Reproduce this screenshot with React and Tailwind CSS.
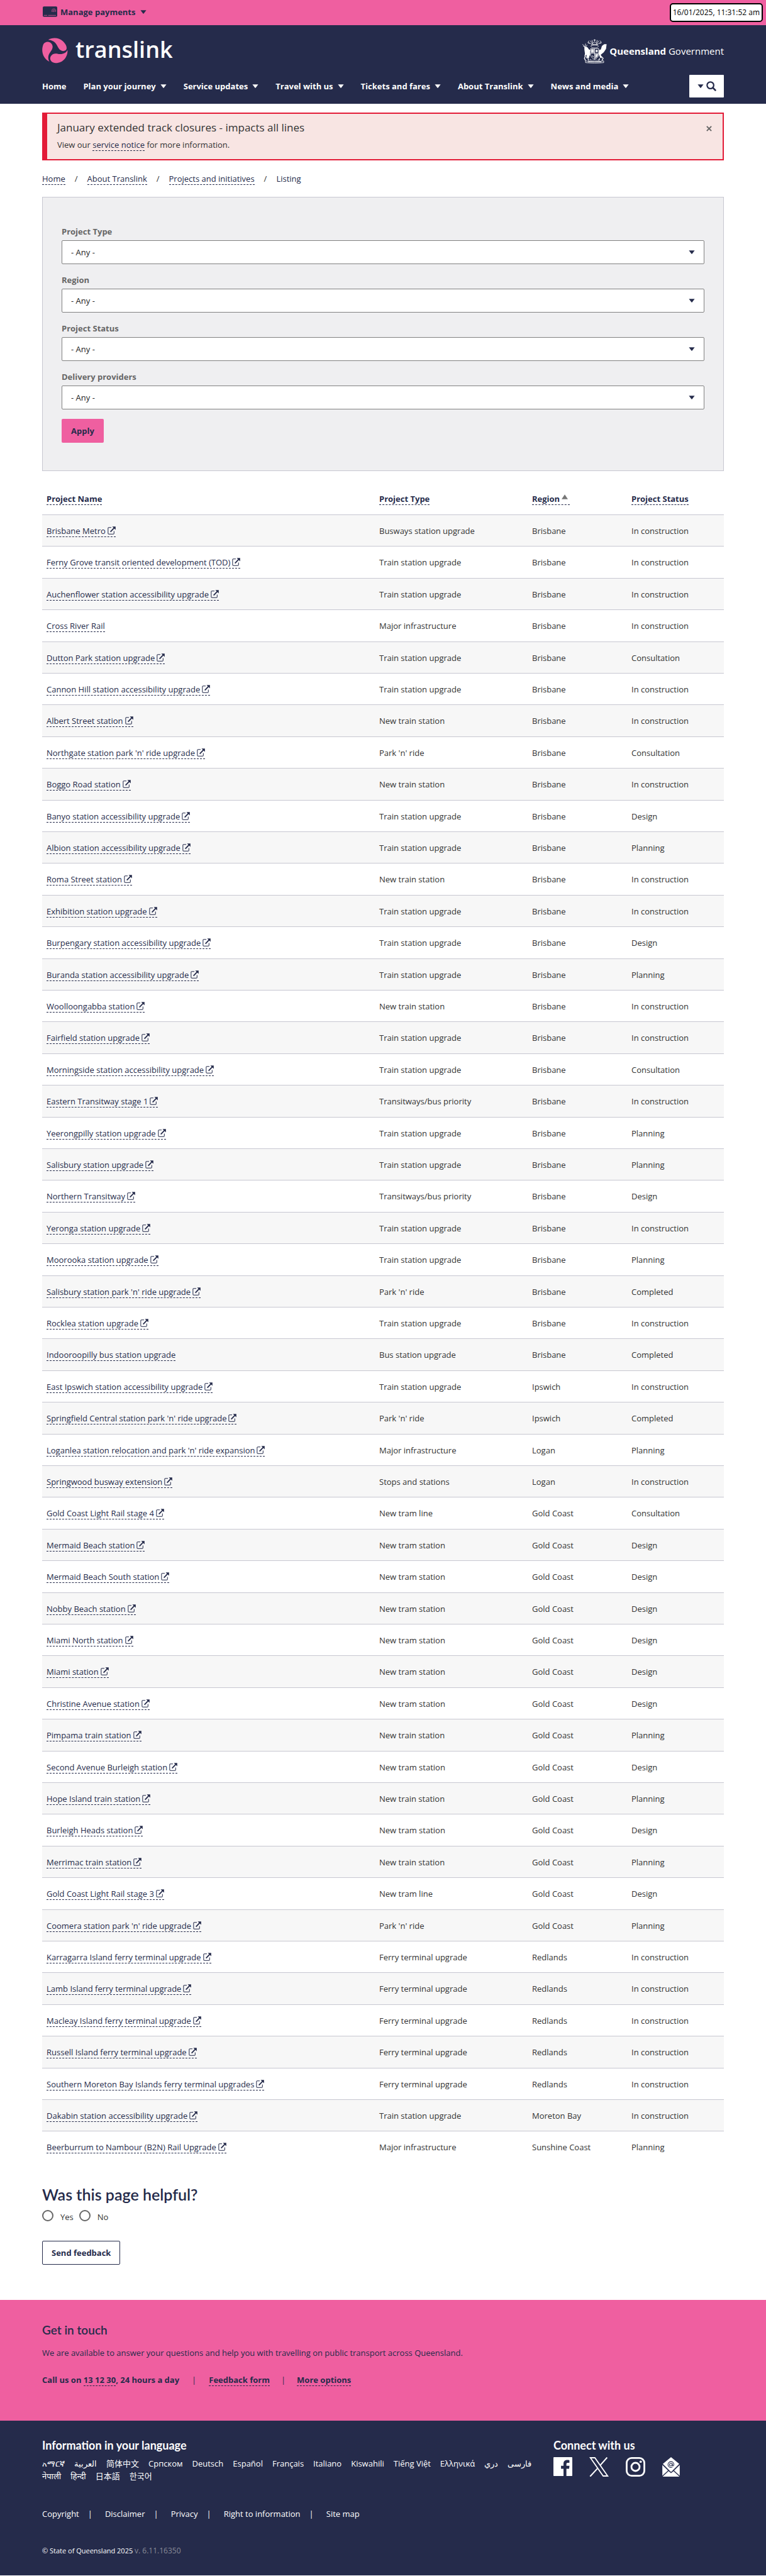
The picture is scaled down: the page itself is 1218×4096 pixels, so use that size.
import React from "react";

const NAV = [
  { label: "Home", menu: false },
  { label: "Plan your journey", menu: true },
  { label: "Service updates", menu: true },
  { label: "Travel with us", menu: true },
  { label: "Tickets and fares", menu: true },
  { label: "About Translink", menu: true },
  { label: "News and media", menu: true },
];

const FILTERS = [
  { id: "type", label: "Project Type" },
  { id: "region", label: "Region" },
  { id: "status", label: "Project Status" },
  { id: "providers", label: "Delivery providers" },
];

const TRAIN = "Train station upgrade";
const NEW_TRAIN = "New train station";
const NEW_TRAM = "New tram station";
const TRAM_LINE = "New tram line";
const PARK = "Park 'n' ride";
const FERRY = "Ferry terminal upgrade";
const MAJOR = "Major infrastructure";
const PRIORITY = "Transitways/bus priority";
const BUILD = "In construction";

/* name, type, region, status, links to another site */
const PROJECTS = [
  ["Brisbane Metro", "Busways station upgrade", "Brisbane", BUILD, true],
  ["Ferny Grove transit oriented development (TOD)", TRAIN, "Brisbane", BUILD, true],
  ["Auchenflower station accessibility upgrade", TRAIN, "Brisbane", BUILD, true],
  ["Cross River Rail", MAJOR, "Brisbane", BUILD, false],
  ["Dutton Park station upgrade", TRAIN, "Brisbane", "Consultation", true],
  ["Cannon Hill station accessibility upgrade", TRAIN, "Brisbane", BUILD, true],
  ["Albert Street station", NEW_TRAIN, "Brisbane", BUILD, true],
  ["Northgate station park 'n' ride upgrade", PARK, "Brisbane", "Consultation", true],
  ["Boggo Road station", NEW_TRAIN, "Brisbane", BUILD, true],
  ["Banyo station accessibility upgrade", TRAIN, "Brisbane", "Design", true],
  ["Albion station accessibility upgrade", TRAIN, "Brisbane", "Planning", true],
  ["Roma Street station", NEW_TRAIN, "Brisbane", BUILD, true],
  ["Exhibition station upgrade", TRAIN, "Brisbane", BUILD, true],
  ["Burpengary station accessibility upgrade", TRAIN, "Brisbane", "Design", true],
  ["Buranda station accessibility upgrade", TRAIN, "Brisbane", "Planning", true],
  ["Woolloongabba station", NEW_TRAIN, "Brisbane", BUILD, true],
  ["Fairfield station upgrade", TRAIN, "Brisbane", BUILD, true],
  ["Morningside station accessibility upgrade", TRAIN, "Brisbane", "Consultation", true],
  ["Eastern Transitway stage 1", PRIORITY, "Brisbane", BUILD, true],
  ["Yeerongpilly station upgrade", TRAIN, "Brisbane", "Planning", true],
  ["Salisbury station upgrade", TRAIN, "Brisbane", "Planning", true],
  ["Northern Transitway", PRIORITY, "Brisbane", "Design", true],
  ["Yeronga station upgrade", TRAIN, "Brisbane", BUILD, true],
  ["Moorooka station upgrade", TRAIN, "Brisbane", "Planning", true],
  ["Salisbury station park 'n' ride upgrade", PARK, "Brisbane", "Completed", true],
  ["Rocklea station upgrade", TRAIN, "Brisbane", BUILD, true],
  ["Indooroopilly bus station upgrade", "Bus station upgrade", "Brisbane", "Completed", false],
  ["East Ipswich station accessibility upgrade", TRAIN, "Ipswich", BUILD, true],
  ["Springfield Central station park 'n' ride upgrade", PARK, "Ipswich", "Completed", true],
  ["Loganlea station relocation and park 'n' ride expansion", MAJOR, "Logan", "Planning", true],
  ["Springwood busway extension", "Stops and stations", "Logan", BUILD, true],
  ["Gold Coast Light Rail stage 4", TRAM_LINE, "Gold Coast", "Consultation", true],
  ["Mermaid Beach station", NEW_TRAM, "Gold Coast", "Design", true],
  ["Mermaid Beach South station", NEW_TRAM, "Gold Coast", "Design", true],
  ["Nobby Beach station", NEW_TRAM, "Gold Coast", "Design", true],
  ["Miami North station", NEW_TRAM, "Gold Coast", "Design", true],
  ["Miami station", NEW_TRAM, "Gold Coast", "Design", true],
  ["Christine Avenue station", NEW_TRAM, "Gold Coast", "Design", true],
  ["Pimpama train station", NEW_TRAIN, "Gold Coast", "Planning", true],
  ["Second Avenue Burleigh station", NEW_TRAM, "Gold Coast", "Design", true],
  ["Hope Island train station", NEW_TRAIN, "Gold Coast", "Planning", true],
  ["Burleigh Heads station", NEW_TRAM, "Gold Coast", "Design", true],
  ["Merrimac train station", NEW_TRAIN, "Gold Coast", "Planning", true],
  ["Gold Coast Light Rail stage 3", TRAM_LINE, "Gold Coast", "Design", true],
  ["Coomera station park 'n' ride upgrade", PARK, "Gold Coast", "Planning", true],
  ["Karragarra Island ferry terminal upgrade", FERRY, "Redlands", BUILD, true],
  ["Lamb Island ferry terminal upgrade", FERRY, "Redlands", BUILD, true],
  ["Macleay Island ferry terminal upgrade", FERRY, "Redlands", BUILD, true],
  ["Russell Island ferry terminal upgrade", FERRY, "Redlands", BUILD, true],
  ["Southern Moreton Bay Islands ferry terminal upgrades", FERRY, "Redlands", BUILD, true],
  ["Dakabin station accessibility upgrade", TRAIN, "Moreton Bay", BUILD, true],
  ["Beerburrum to Nambour (B2N) Rail Upgrade", MAJOR, "Sunshine Coast", "Planning", true],
];

const LANGUAGES = [
  "አማርኛ", "العربية", "简体中文", "Српском", "Deutsch", "Español", "Français", "Italiano",
  "Kiswahili", "Tiếng Việt", "Ελληνικά", "دري", "فارسی", "नेपाली", "हिन्दी", "日本語", "한국어",
];

const LEGAL = ["Copyright", "Disclaimer", "Privacy", "Right to information", "Site map"];

const WRAP = "mx-auto w-full max-w-[1084px]";
const LINK = "border-b border-dashed border-[#252b4b] text-[#252b4b]";

function Caret({ className = "" }) {
  return (
    <svg viewBox="0 0 10 6" className={`h-[6px] w-[10px] shrink-0 fill-current ${className}`} aria-hidden="true">
      <path d="M0.4 0.3h9.2L5.6 5.4a.8.8 0 0 1-1.2 0z" />
    </svg>
  );
}

function ExternalIcon() {
  return (
    <svg viewBox="0 0 14 14" className="ml-[3px] inline-block size-[13px] align-[-1px]" aria-hidden="true">
      <path d="M6.5 2H2.2C1.3 2 .9 2.5.9 3.2v8.6c0 .8.4 1.3 1.3 1.3h7.6c.8 0 1.3-.5 1.3-1.3V8" fill="none" stroke="#252b4b" strokeWidth="1.1" />
      <path d="M5 9.2L11.4 2.6" stroke="#252b4b" strokeWidth="1.9" />
      <path d="M8 .2h5.8V6z" fill="#252b4b" />
    </svg>
  );
}

function PaymentCard() {
  return (
    <svg viewBox="0 0 24 17" className="h-[17px] w-[23px]" aria-hidden="true">
      <rect width="24" height="17" rx="2" fill="#252b4b" />
      <path d="M1.8 14.6h5.6M9 14.6h13" stroke="#ef5fa0" strokeWidth="0.8" />
      <path d="M15.2 8.6V6a3.4 3.4 0 0 1 6.4 0v2.8M16.8 9V6.6a1.7 1.7 0 0 1 3.2 0V9M18.4 6.8v2.4" fill="none" stroke="#ef5fa0" strokeWidth="0.8" strokeDasharray="1.6 0.5" />
    </svg>
  );
}

function TranslinkMark() {
  return (
    <svg viewBox="20 175 132 131" className="size-[41px]" fill="#ef5fa0" aria-hidden="true">
      <path d="M51 185C72 172 106 172 128 194C145 211 150 229 141 238C129 247 112 242 104 228C94 209 86 188 51 185Z" />
      <path d="M57 297C24 280 12 242 27 207C36 192 58 191 68 205C80 222 71 236 61 249C50 264 48 280 57 297Z" />
      <path d="M150 237C152 272 127 305 88 304C66 303 57 285 63 272C71 256 87 254 101 257C124 261 142 253 150 237Z" />
    </svg>
  );
}

function Crest() {
  return (
    <svg viewBox="0 0 43 43" className="h-[40px] w-[41px]" aria-hidden="true">
      <g fill="none" stroke="#fff" strokeWidth="0.9">
        <path d="M21.5 1.5v4M19.5 3h4M14 4c2 3 4 4 5 6M29 4c-2 3-4 4-5 6M10 8c3-1 5 1 7 3M33 8c-3-1-5 1-7 3M12 4l-2 3 3 2M31 4l2 3-3 2M17 3l1 4M26 3l-1 4" />
        <path d="M17 8.500c1.500-2.500 7.500-2.500 9 0v3h-9zM18 10h7M15 13c4-2.500 9-2.500 13 0l-2 3h-9z" strokeDasharray="2 0.6" />
        <path d="M1 10l3 4M2 13.500l4 1M6 9l-1 5M8.500 11l-2 4" />
        <path d="M14.500 17.500h14v9c0 5-3.500 8-7 9.500-3.500-1.500-7-4.500-7-9.500zM21.500 17.500v18M14.500 25.500h14" />
        <path d="M6 38.500c10 1.500 21 1.500 31 0v3c-10 1-21 1-31 0zM10 40.300h23" />
        <path d="M6 30l-2 4 2 4M12 31l-2 4 2 3M32 30l4 4-2 4M30 34l-1 4" strokeWidth="1.400" />
      </g>
      <g fill="#fff">
        <path d="M4 14l5 1 3 4 2.500 1-1 3 .5 5-3 5-4 1 1-6-4 3 1-5-1-7z" />
        <path d="M42 10l-1 8-4 6-5 4 2 6-3-1-2.500-6 .5-7 3-1 2-6 4-3z" />
        <path d="M15.500 18.500h5v6h-5zM22.500 26.500h5c0 4-2.500 6-5 8zM16.500 29l3 1v3z" opacity="0.9" />
        <circle cx="25" cy="21.500" r="2" />
        <path d="M13 35l3 2h11l3-2-1 3H14z" opacity="0.7" />
      </g>
    </svg>
  );
}

function FacebookIcon() {
  return (
    <svg viewBox="0 0 32 32" className="size-[30px]" aria-hidden="true">
      <path fill="#fff" d="M1.200 0h29.600C31.500 0 32 .5 32 1.200v29.600c0 .7-.5 1.200-1.200 1.200H22V19.700h4.600l.6-5H22v-2.900c0-1.500.6-2.300 2.200-2.300h2.900V5.200C26.300 5 25 4.900 23.300 4.900c-3.700 0-6.200 2.200-6.200 6.200v3.600h-4.200v5h4.200V32H1.200C.5 32 0 31.500 0 30.800V1.200C0 .5.500 0 1.200 0z" />
    </svg>
  );
}

function XIcon() {
  return (
    <svg viewBox="0 0 32 32" className="size-[31px]" fill="none" stroke="#fff" aria-hidden="true">
      <path d="M1.800 1h7.400l21 30h-7.400z" strokeWidth="1.900" />
      <path d="M29.300.5L17.800 13.600M13.800 18.200L1.300 31.800" strokeWidth="2.100" />
    </svg>
  );
}

function InstagramIcon() {
  return (
    <svg viewBox="0 0 32 32" className="size-[31px]" fill="none" stroke="#fff" aria-hidden="true">
      <rect x="1.500" y="1.500" width="29" height="29" rx="8" strokeWidth="2.900" />
      <circle cx="16" cy="16" r="6.700" strokeWidth="2.900" />
      <circle cx="24.500" cy="7.500" r="1.900" fill="#fff" stroke="none" />
    </svg>
  );
}

function MailIcon() {
  return (
    <svg viewBox="0 0 29 32" className="h-[31px] w-[28px]" aria-hidden="true">
      <path fill="#fff" d="M14.500 0L28 11 14.500 24.500 1 11z" />
      <path fill="#fff" d="M.2 13l9.300 9L.2 30.400zM28.800 13l-9.300 9 9.300 8.400zM10.400 22.900l4.100 3.400 4.100-3.400 9.700 9.100H.7z" />
      <g fill="none" stroke="#252b4b" strokeWidth="1.100">
        <circle cx="14.200" cy="12.300" r="2.200" />
        <path d="M16.600 10v3.500c0 1.600 2.600 1.300 2.600-1.300 0-3-2.200-4.900-4.900-4.900a4.900 4.900 0 1 0 2.600 9.100" />
      </g>
    </svg>
  );
}

function HeaderCell({ children, className = "", sorted }) {
  return (
    <th scope="col" aria-sort={sorted ? "ascending" : undefined} className={`h-[50px] px-[7px] text-left font-bold ${className}`}>
      <a href="#sort" className={LINK}>
        {children}
        {sorted && (
          <svg viewBox="0 0 12 9" className="mx-[3px] inline-block h-[8px] w-[10px] align-[4px]" aria-hidden="true">
            <path d="M6 0l6 9H0z" fill="#777" />
          </svg>
        )}
      </a>
    </th>
  );
}

export default function App() {
  return (
    <div className="relative bg-white font-['Open_Sans','Noto_Sans','Noto_Sans_CJK_SC','Noto_Sans_CJK_KR',sans-serif] text-[13px] leading-5 text-[#333]">
      <div className="absolute top-[5px] right-[5px] rounded-[5px] border-2 border-black bg-white px-[3px] py-1 text-[12px] leading-[18px] text-black">
        16/01/2025, 11:31:52 am
      </div>

      <div className="bg-[#ef5fa0] py-2">
        <div className={WRAP}>
          <button type="button" className="flex h-6 items-center pb-[3px] pl-px font-bold text-[#252b4b]">
            <PaymentCard />
            <span className="ml-[5px]">Manage payments</span>
            <Caret className="ml-2" />
          </button>
        </div>
      </div>

      <header className="bg-[#252b4b] pt-5 pb-[10px] text-white">
        <div className={WRAP}>
          <div className="flex h-[41px] items-center justify-between">
            <a href="#home" className="flex items-center gap-3">
              <TranslinkMark />
              <span className="pb-1 font-['Open_Sans',sans-serif] text-[36px] leading-[41px] font-semibold">translink</span>
            </a>
            <a href="#government" className="flex items-center gap-[3px]">
              <Crest />
              <span className="font-['Open_Sans',sans-serif] text-[15px]">
                <b className="font-bold">Queensland</b> Government
              </span>
            </a>
          </div>
          <nav className="mt-[18px] flex items-center justify-between">
            <ul className="flex items-center gap-[27px]">
              {NAV.map((item) => (
                <li key={item.label}>
                  <a href="#nav" className="flex items-center gap-[7px] font-bold">
                    {item.label}
                    {item.menu && <Caret />}
                  </a>
                </li>
              ))}
            </ul>
            <button type="button" aria-label="Search" className="flex h-9 w-[55px] items-center justify-center gap-1 rounded-[1px] bg-white text-[#252b4b]">
              <Caret />
              <svg viewBox="0 0 16 16" className="size-4" fill="none" stroke="currentColor" aria-hidden="true">
                <circle cx="6.600" cy="6.600" r="5.300" strokeWidth="2.200" />
                <path d="M10.500 10.500l4.700 4.700" strokeWidth="2.600" />
              </svg>
            </button>
          </nav>
        </div>
      </header>

      <main className={`${WRAP} pt-[14px] pb-14`}>
        <section className="flex justify-between border-2 border-l-8 border-[#e31b37] bg-[#f8e5e3] pt-[10px] pr-3 pb-[13px] pl-4">
          <div>
            <h2 className="text-[17px] leading-6">January extended track closures - impacts all lines</h2>
            <p className="mt-[5px]">
              View our <a href="#notice" className={LINK}>service notice</a> for more information.
            </p>
          </div>
          <button type="button" aria-label="Close" className="flex size-5 items-center justify-center self-start pt-[7px] text-[#666]">
            <svg viewBox="0 0 10 10" className="size-[9px]" aria-hidden="true">
              <path d="M1 1l8 8M9 1L1 9" stroke="currentColor" strokeWidth="2.200" />
            </svg>
          </button>
        </section>

        <nav aria-label="Breadcrumb" className="mt-[19px]">
          <ol className="flex">
            {["Home", "About Translink", "Projects and initiatives"].map((crumb) => (
              <li key={crumb}>
                <a href="#crumb" className={LINK}>{crumb}</a>
                <span className="px-[15px]">/</span>
              </li>
            ))}
            <li aria-current="page" className="text-[#252b4b]">Listing</li>
          </ol>
        </nav>

        <form className="mt-[19px] border border-[#c7c7d1] bg-[#efeff1] px-[30px] py-11">
          {FILTERS.map((filter) => (
            <div key={filter.id} className="mb-[15px]">
              <label htmlFor={filter.id} className="mb-1 block font-bold text-[#666]">{filter.label}</label>
              <div className="relative">
                <select id={filter.id} className="block h-[38px] w-full appearance-none rounded-[2px] border border-[#808080] bg-white px-[14px] text-[#252525]">
                  <option>- Any -</option>
                </select>
                <Caret className="pointer-events-none absolute top-4 right-[15px] text-[#252b4b]" />
              </div>
            </div>
          ))}
          <button type="button" className="block h-[38px] rounded-[2px] bg-[#ef5fa0] px-[15px] font-bold text-[#252b4b]">Apply</button>
        </form>

        <table className="mt-[19px] w-full table-fixed border-separate border-spacing-0">
          <thead>
            <tr>
              <HeaderCell>Project Name</HeaderCell>
              <HeaderCell className="w-[243px]">Project Type</HeaderCell>
              <HeaderCell className="w-[158px]" sorted>Region</HeaderCell>
              <HeaderCell className="w-[154px]">Project Status</HeaderCell>
            </tr>
          </thead>
          <tbody className="[&_td]:h-[50px] [&_td]:border-t [&_td]:border-[#c7c7d1] [&_td]:px-[7px] [&_tr:nth-child(5n+2)_td]:h-[51px] [&_tr:nth-child(5n+4)_td]:h-[51px]">
            {PROJECTS.map(([name, type, region, status, external]) => (
              <tr key={name} className="odd:bg-[#f7f7f7]">
                <td>
                  <a href="#project" className={LINK}>
                    {name}
                    {external && <ExternalIcon />}
                  </a>
                </td>
                <td>{type}</td>
                <td>{region}</td>
                <td>{status}</td>
              </tr>
            ))}
          </tbody>
        </table>

        <form className="mt-[35px]">
          <fieldset>
            <legend className="font-['Lato',sans-serif] text-[25px] leading-[30px] font-semibold text-[#252b4b]">Was this page helpful?</legend>
            <div className="mt-[10px] flex gap-[9px]">
              {["Yes", "No"].map((answer) => (
                <label key={answer} className="flex items-start gap-[11px]">
                  <input type="radio" name="helpful" className="size-[18px] appearance-none rounded-full border-2 border-[#666] bg-white checked:bg-[#252b4b]" />
                  <span className="pt-[2px] leading-[18px]">{answer}</span>
                </label>
              ))}
            </div>
          </fieldset>
          <button type="button" className="mt-[29px] block h-[38px] rounded-[2px] border border-[#252b4b] bg-white px-[14px] font-bold text-[#252b4b]">Send feedback</button>
        </form>
      </main>

      <section className="bg-[#ef5fa0] pt-9 pb-[55px] text-[#252b4b]">
        <div className={WRAP}>
          <h2 className="font-['Lato',sans-serif] text-[19px] leading-6 font-semibold">Get in touch</h2>
          <p className="mt-[14px]">We are available to answer your questions and help you with travelling on public transport across Queensland.</p>
          <p className="mt-[23px] font-bold">
            Call us on <a href="#call" className={LINK}>13 12 30</a>, 24 hours a day
            <span className="px-5 font-normal">|</span>
            <a href="#feedback" className={LINK}>Feedback form</a>
            <span className="px-[18px] font-normal">|</span>
            <a href="#options" className={LINK}>More options</a>
          </p>
        </div>
      </section>

      <footer className="bg-[#252b4b] pt-[27px] pb-[31px] text-white">
        <div className={WRAP}>
          <div className="grid grid-cols-4">
            <div className="col-span-3">
              <h2 className="font-['Lato',sans-serif] text-[18px] leading-6 font-bold">Information in your language</h2>
              <ul className="mt-[7px] flex flex-wrap gap-x-[15px]">
                {LANGUAGES.map((language) => (
                  <li key={language} className="h-5"><a href="#language">{language}</a></li>
                ))}
              </ul>
            </div>
            <div>
              <h2 className="font-['Lato',sans-serif] text-[18px] leading-6 font-bold">Connect with us</h2>
              <div className="mt-[7px] flex gap-[27px]">
                <a href="#facebook" aria-label="Facebook"><FacebookIcon /></a>
                <a href="#x" aria-label="X"><XIcon /></a>
                <a href="#instagram" aria-label="Instagram"><InstagramIcon /></a>
                <a href="#email" aria-label="Email"><MailIcon /></a>
              </div>
            </div>
          </div>
          <ul className="mt-10 flex">
            {LEGAL.map((item, index) => (
              <li key={item}>
                <a href="#legal">{item}</a>
                {index < LEGAL.length - 1 && <span className="pr-5 pl-[14px]">|</span>}
              </li>
            ))}
          </ul>
          <p className="mt-[41px] text-[11px] leading-4">
            © State of Queensland 2025 <span className="text-[12px] text-[#8a8b98]">v. 6.11.16350</span>
          </p>
        </div>
      </footer>
    </div>
  );
}
